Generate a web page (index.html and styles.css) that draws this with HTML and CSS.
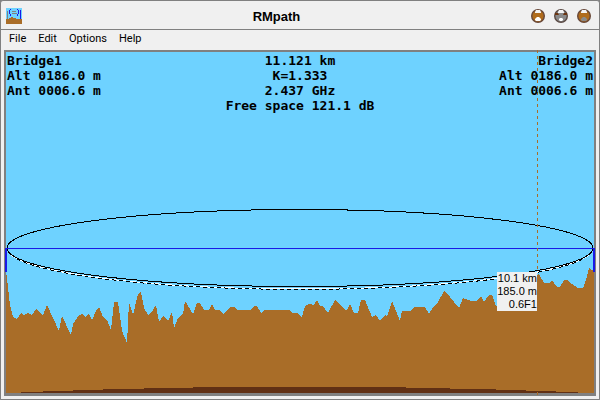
FILE: index.html
```
<!DOCTYPE html>
<html lang="en">
<head>
  <meta charset="UTF-8" />
  <meta name="viewport" content="width=device-width, initial-scale=1.0" />
  <title>RMpath</title>
  <link rel="stylesheet" href="styles.css">
</head>
<body>
  <div class="window">
    <header class="titlebar">
      <svg class="app-icon" viewBox="0 0 16 16" aria-hidden="true">
        <rect width="16" height="16" fill="#6ed2ff" />
        <path d="M0 11h3v-1h2v-1h2v1h3v1h6v5H0z" fill="#a96d28" />
        <path d="M1.500 3v8M6 3.500h4M6 5.500h5" stroke="#808080" fill="none" />
        <path d="M14.500 2v9M4.500 1v1M3.500 2v4M4.500 6v2M11.500 1v1M12.500 2v4M11.500 6v2" stroke="#1a1ae6" fill="none" />
      </svg>
      <h1 class="title">RMpath</h1>
      <div class="window-buttons">
        <button class="win-btn" type="button" aria-label="Minimize">
          <svg viewBox="0 0 14 14">
            <circle cx="7" cy="7" r="6.300" fill="#b06c1c" stroke="#67483a" stroke-width="1.400" />
            <path d="M5 1h4l1 2v1H4V3z" fill="#f4f4f4" />
            <path d="M4 11v-1l2-2h2l2 2v1l-1 1H5z" fill="#fff" />
          </svg>
        </button>
        <button class="win-btn" type="button" aria-label="Maximize">
          <svg viewBox="0 0 14 14">
            <circle cx="7" cy="7" r="6.300" fill="#8a8a8a" stroke="#5a4a44" stroke-width="1.400" />
            <path d="M5 1h4l1 2v1H4V3z" fill="#f4f4f4" />
            <path d="M1 4h3l1 2H1zM10 4h3v2H9z" fill="#6b3410" />
            <path d="M5 11v-1l1-1h2l1 1v1l-1 1H6z" fill="#fff" />
          </svg>
        </button>
        <button class="win-btn" type="button" aria-label="Close">
          <svg viewBox="0 0 14 14">
            <circle cx="7" cy="7" r="6.300" fill="#b06c1c" stroke="#67483a" stroke-width="1.400" />
            <path d="M5 1h4l1 2v1H4V3z" fill="#f4f4f4" />
            <path d="M4 11v-1l2-2h2l2 2v1l-1 1H5z" fill="#8a8a8a" />
          </svg>
        </button>
      </div>
    </header>

    <nav class="menubar">
      <button class="menu" type="button">File</button>
      <button class="menu" type="button">Edit</button>
      <button class="menu" type="button">Options</button>
      <button class="menu" type="button">Help</button>
    </nav>

    <main class="plot">
      <!-- Path profile -->
      <svg class="profile" viewBox="6 52 588 341" preserveAspectRatio="none" aria-label="Path profile">
        <path class="ground" d="M6 271L8 287 10 305 13 317 17 319 21 313 24 315 28 313 32 315 36 309 43 315 47 305 59 331 62 316 71 335 73 324 79 315 82 314 85 317 89 314 92 320 97 309 99 307 103 317 107 320 111 330 114 302 118 302 122 331 127 343 129 302 133 315 138 294 141 292 144 308 148 315 150 313 153 310 156 305 159 322 163 316 168 321 172 312 174 328 178 318 183 314 185 301 193 314 197 303 200 303 204 310 209 310 212 304 215 310 219 310 223 314 231 307 234 307 237 310 250 310 254 306 257 306 261 313 264 310 289 310 293 313 297 313 302 317 305 306 309 304 311 304 313 306 317 300 320 306 323 306 328 313 335 300 345 310 347 310 350 304 354 313 358 313 361 300 365 300 372 317 376 315 380 321 385 315 387 317 392 301 400 321 402 311 411 311 414 307 425 307 429 314 433 307 438 302 444 291 450 297 459 308 463 298 471 301 477 301 481 296 484 302 489 295 492 295 496 306 499 308 539 274 544 283 549 283 552 280 557 287 560 287 564 280 567 280 572 284 578 288 583 288 586 280 589 268 592 270 594 271V393H6z" />
        <!-- Earth curvature -->
        <path class="curvature" d="M21 393V392H43V391H73V390H103V389H144V388H193V387H406V388H450V389H496V390H526V391H556V392H578V393z" />
        <!-- 0.6 F1 limit -->
        <path class="limit-base" d="M7 248A293 41 0 0 0 593 248" />
        <path class="limit-dash" d="M17 259A293 41 0 0 0 583 259" />
        <ellipse class="fresnel" cx="300" cy="248" rx="293" ry="38.500" />
        <path class="sight" d="M6 248.500H594" />
        <path class="mast" d="M6 248V272M594 248V272" />
        <path class="cursor" d="M537.500 50V272M537.500 392V395" />
      </svg>

      <div class="readout">
        <div class="site">
          <p>Bridge1</p>
          <p>Alt 0186.0 m</p>
          <p>Ant 0006.6 m</p>
        </div>
        <div class="site link">
          <p>11.121 km</p>
          <p>K=1.333</p>
          <p>2.437 GHz</p>
          <p>Free space 121.1 dB</p>
        </div>
        <div class="site far">
          <p>Bridge2</p>
          <p>Alt 0186.0 m</p>
          <p>Ant 0006.6 m</p>
        </div>
      </div>

      <div class="tooltip">
        <p>10.1 km</p>
        <p>185.0 m</p>
        <p>0.6F1</p>
      </div>
    </main>
  </div>
</body>
</html>
```

FILE: styles.css
```
* {
  margin: 0;
  padding: 0;
  box-sizing: border-box;
}

body {
  background-color: #808080;
  color: #000;
  font-family: "Liberation Sans", Arial, sans-serif;
}

button {
  border: none;
  background: none;
  color: inherit;
  font: inherit;
}

.window {
  display: flex;
  flex-direction: column;
  height: 100vh;
  border: 1px solid #808080;
  border-radius: 3px 3px 0 0;
  background-color: #f0f0f0;
}

/* Title bar */
.titlebar {
  display: flex;
  align-items: center;
  height: 29px;
  padding: 2px 8px 0 5px;
  border-bottom: 1px solid #808080;
}

.app-icon {
  width: 16px;
  height: 16px;
  shape-rendering: crispEdges;
}

.title {
  flex: 1;
  padding-top: 2px;
  font-size: 13px;
  line-height: 16px;
  text-align: center;
}

.window-buttons {
  display: flex;
  gap: 9px;
}

.win-btn,
.win-btn svg {
  display: block;
  width: 14px;
  height: 14px;
}

/* Menu */
.menubar {
  display: flex;
  gap: 12px;
  height: 20px;
  padding: 0 8px;
}

.menu {
  font-family: Roboto, Tahoma, sans-serif;
  font-size: 11px;
  line-height: 16px;
  padding-bottom: 2px;
}

/* Plot */
.plot {
  position: relative;
  flex: 1;
  min-height: 0;
  margin: 0 3px 3px;
  border: 2px solid #808080;
  border-bottom-width: 3px;
  background-color: #6ed2ff;
}

.profile {
  position: absolute;
  inset: 0;
  width: 100%;
  height: 100%;
  overflow: visible;
  fill: none;
  shape-rendering: crispEdges;
}

.ground { fill: #a96d28; }
.curvature { fill: #613014; }
.fresnel { stroke: #000; }
.limit-base { stroke: #fff; }
.limit-dash { stroke: #000; stroke-dasharray: 4 3; }
.sight { stroke: #1a1ae6; }
.mast { stroke: #1a1ae6; stroke-width: 2; }
.cursor { stroke: #a96d28; stroke-dasharray: 3 3; }

.readout {
  position: relative;
  display: grid;
  grid-template-columns: 1fr auto 1fr;
  padding: 1px;
  font-family: "DejaVu Sans Mono", monospace;
  font-size: 13px;
  font-weight: bold;
  line-height: 15px;
}

.link { text-align: center; }
.far { text-align: right; }

.tooltip {
  position: absolute;
  top: 64.5%;
  right: 9.7%;
  background-color: #f0f0f0;
  font-size: 11px;
  line-height: 13px;
  text-align: right;
}
```
